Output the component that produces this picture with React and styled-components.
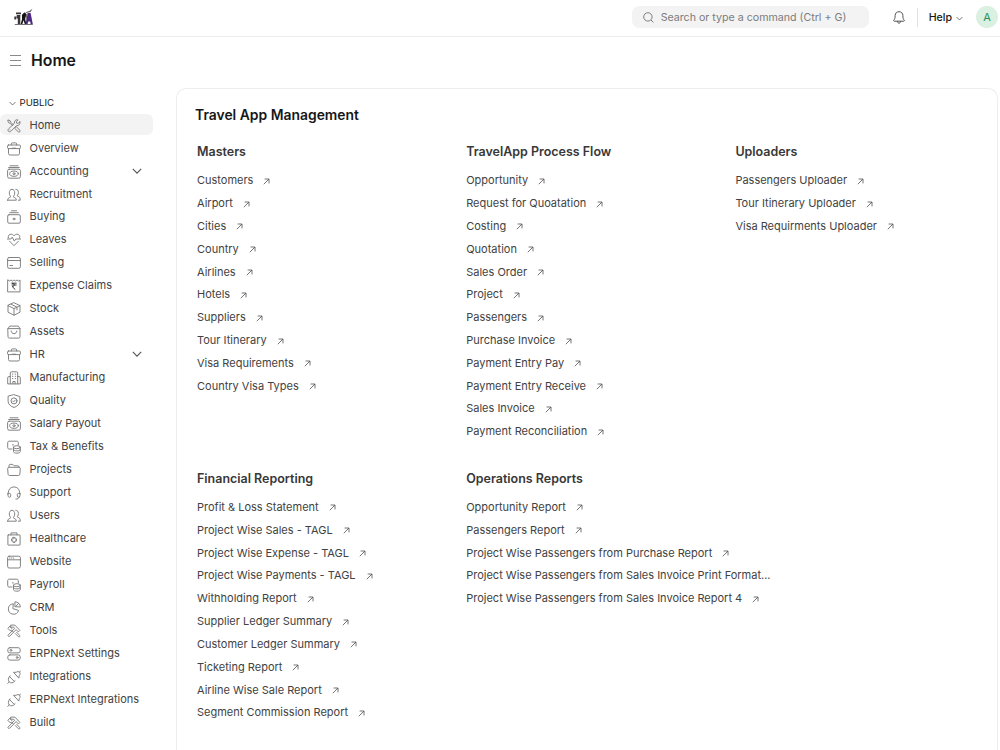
import React from 'react';
import styled, { createGlobalStyle } from 'styled-components';

const icons = {
  tool: (
    <>
      <path d="M1.200 1.100l2 .7.5 1.400 2.600 2.600M1.200 1.100l-.5.6.9 2 1.400.5 2.500 2.500" />
      <path d="M8.300 8.200l.9-.6 3.700 3.600c.9 1-.6 2.500-1.600 1.600L7.700 9.300z" />
      <path d="M12.900 2.900L11 4.500l-1.400-.4-.3-1.400L11 .9C9 .3 6.800 1.900 7.400 4.300L1.500 9.900c-1.500 1.600.7 4 2.400 2.400l5.800-5.800c2.400.5 3.900-1.500 3.200-3.600zM2.900 10.900h.1" />
    </>
  ),
  briefcase: (
    <>
      <rect x=".6" y="3" width="12.800" height="3.600" rx=".8" />
      <path d="M1.500 6.600v5c0 .9.500 1.400 1.400 1.400h8.200c.9 0 1.400-.5 1.400-1.400v-5M4.300 3V2c0-.7.400-1.100 1.100-1.100h3.200c.7 0 1.100.4 1.100 1.100v1" />
      <path d="M5.300 6.200h3.400" />
    </>
  ),
  accounting: (
    <>
      <path d="M3 .8h8M1.700 2.500h10.600" />
      <rect x=".6" y="4.200" width="12.800" height="9" rx="1.600" />
      <ellipse cx="7" cy="8.700" rx="4.300" ry="2.600" />
      <circle cx="7" cy="8.700" r="1" />
    </>
  ),
  users: (
    <>
      <path d="M.7 12.200c0-1.900 1.100-2.600 2.500-2.900.5-.1.600-.6.2-1C2.700 7.500 2.300 6.100 2.300 4.900c0-2.200 1-3.600 2.700-3.600s2.700 1.400 2.700 3.600c0 1.200-.4 2.600-1.100 3.400-.4.400-.3.900.2 1 1.400.3 2.500 1 2.500 2.900H.7z" />
      <path d="M8.800 1.300c1.600 0 2.600 1.200 2.600 3.100 0 1.100-.3 2.100-.9 2.900-.3.500-.2.800.3 1 1.500.4 2.500 1.100 2.500 3.900h-1.900" />
    </>
  ),
  buying: (
    <>
      <path d="M4.500.8h5M2.700 2.700h8.600" />
      <rect x=".7" y="4.700" width="12.600" height="8.500" rx="1.300" />
      <circle cx="7" cy="9" r=".9" />
    </>
  ),
  heart: (
    <>
      <path d="M1.300 5C.8 2.400 2.300 1.200 3.900 1.200c1.300 0 2.400.6 3.100 1.700.7-1.100 1.800-1.700 3.100-1.700 1.600 0 3.100 1.200 2.600 3.800" />
      <path d="M.3 6h3.600l1.300-1.900 2.100 4 1.500-2.100h4.900M2.600 8.200L7 12.700l4.400-4.500" />
    </>
  ),
  card: (
    <>
      <rect x=".6" y="1.500" width="12.800" height="10.800" rx="1.500" />
      <path d="M.6 4.500h12.800M2.900 9.500h2.700" />
    </>
  ),
  expense: (
    <>
      <path d="M1 1l1.500 1L4 1l1.500 1L7 1l1.500 1L10 1l1.500 1L13 1v11.900H1z" />
      <path
        d="M5 4.200h4.200M5 6h4.200M5.200 4.200c2.900 0 2.900 3.400 0 3.400l2.800 2.700"
        stroke="#383838"
        strokeWidth="1"
      />
    </>
  ),
  stock: (
    <path d="M7 .8l6 2.800v6.600l-6 3-6-3V3.600zM1 3.600l6 3 6-3M7 6.600v6.600M4 2.200l6 3v2.700" />
  ),
  assets: (
    <>
      <path d="M1 3.600L2.700 1.100h8.600L13 3.600v8.100c0 .9-.5 1.400-1.400 1.400H2.400c-.9 0-1.400-.5-1.400-1.400zM1 3.600h12" />
      <path d="M4.200 6c0 1.500 1.200 2.700 2.800 2.700S9.800 7.500 9.800 6" />
    </>
  ),
  building: (
    <>
      <path d="M3.300 12.900V1.900c0-.7.400-1.100 1.100-1.100h5.200c.7 0 1.100.4 1.100 1.100v11M3.300 5.600H1.800c-.7 0-1.100.4-1.100 1.100v6.200h12.600V6.700c0-.7-.4-1.100-1.100-1.100h-1.500M5.900 12.900v-2.400h2.200v2.400" />
      <path d="M5.400 3.100h.4M8.200 3.100h.4M5.400 5.300h.4M8.200 5.300h.4M5.400 7.600h.4M8.200 7.600h.4" />
    </>
  ),
  quality: (
    <>
      <path d="M7 .7l5.900 1.900v4.600c0 3-2.400 5-5.900 6.300-3.500-1.300-5.900-3.300-5.900-6.300V2.600z" />
      <circle cx="7" cy="6.900" r="3" />
      <path d="M5.700 7l.9.900 1.800-1.900" />
    </>
  ),
  money: (
    <>
      <path d="M5 9H2.200C1.200 9 .7 8.500.7 7.500V2.700c0-1 .5-1.500 1.500-1.500h7.600c1 0 1.500.5 1.500 1.500V5M5.500 4.900h.9" />
      <ellipse cx="9.900" cy="7.200" rx="3.400" ry="1.500" />
      <path d="M6.500 7.200v4.400c0 .9 1.500 1.600 3.400 1.600s3.400-.7 3.400-1.600V7.200M6.500 9.400c0 .9 1.500 1.500 3.400 1.500s3.400-.6 3.400-1.500" />
    </>
  ),
  folder: (
    <path d="M2 4.200V2.500c0-.7.400-1.100 1.100-1.100h2.700l1.300 1.400h3.800c.7 0 1.100.4 1.100 1.100v.4M.7 5.600c0-.9.500-1.300 1.400-1.300h9.800c.9 0 1.400.4 1.400 1.300l-.4 5.500c-.1.900-.6 1.400-1.500 1.400H2.600c-.9 0-1.400-.5-1.500-1.400z" />
  ),
  support: (
    <>
      <path d="M1.300 8V6.700C1.300 3.300 3.800.9 7 .9s5.700 2.400 5.700 5.800V8M12.500 10.500c-.3 1.700-1.500 2.600-3.600 2.600" />
      <path d="M1 7.400h1.600c.7 0 1.100.4 1.100 1.100v1.600c0 .7-.4 1.100-1.100 1.100-1 0-1.600-.6-1.600-1.600zM13 7.400h-1.600c-.7 0-1.100.4-1.100 1.100v1.600c0 .7.400 1.100 1.100 1.100 1 0 1.600-.6 1.600-1.600z" />
    </>
  ),
  healthcare: (
    <>
      <rect x=".9" y="2.900" width="12.200" height="10.200" rx=".4" />
      <path d="M4 2.900V.9h6v2" />
      <path d="M6 5.400h2v1.500h1.500v2H8v1.500H6V8.900H4.500v-2H6z" />
    </>
  ),
  website: (
    <>
      <rect x=".6" y="1.200" width="12.800" height="11.800" rx="1.600" />
      <path d="M.6 4.800h12.800M2.600 3h.4M4.500 3h.4M6.400 3h.4" />
    </>
  ),
  crm: (
    <>
      <path d="M6 2.800a5.200 5.200 0 1 0 5.600 6.600L6.200 7.700z" />
      <path d="M8.300.8a5 5 0 0 1 5 5.200L8.300 5.700zM8.500 5.600l3.200-3.300" />
    </>
  ),
  hammer: (
    <>
      <path d="M4 1.100h3.900l5 5.300-1.500 1.500-2.300-2.300-6.400 6.600c-.9.900-2.300-.4-1.400-1.300l6.400-6.700-1-1H4z" />
      <path d="M2.700 2.400L.9 4.300l2.300 2.500 1-.9 2 2M2.700 2.400l2.200 2.200M8.300 9.600l3.200 3.200c.9.700 2-.5 1.200-1.300L9.700 8.300" />
    </>
  ),
  settings: (
    <>
      <rect x=".8" y=".7" width="12.400" height="5.200" rx="2" />
      <rect x=".8" y="7.900" width="12.400" height="5.200" rx="2" />
      <circle cx="3.900" cy="3.300" r=".9" />
      <circle cx="10.100" cy="10.500" r=".9" />
    </>
  ),
  integration: (
    <>
      <path d="M2.500 6.600l4.800 4.800c-1.100 1.500-3.600 2-5 .6s-1.200-4.100.2-5.400zM2.100 12.100L.7 13.400M2.500 6.600l.7-.6M7.300 11.400l.7-.6" />
      <path d="M6.900 2.300h2.300c1.200-1.100 2.500-.9 3.300-.1s.9 2.100-.2 3.300l-.4 2.200zM12.400 2.200l1.100-1.300" />
    </>
  ),
};

const sidebarItems = [
  { label: 'Home', icon: 'tool', active: true },
  { label: 'Overview', icon: 'briefcase' },
  { label: 'Accounting', icon: 'accounting', nested: true },
  { label: 'Recruitment', icon: 'users' },
  { label: 'Buying', icon: 'buying' },
  { label: 'Leaves', icon: 'heart' },
  { label: 'Selling', icon: 'card' },
  { label: 'Expense Claims', icon: 'expense' },
  { label: 'Stock', icon: 'stock' },
  { label: 'Assets', icon: 'assets' },
  { label: 'HR', icon: 'briefcase', nested: true },
  { label: 'Manufacturing', icon: 'building' },
  { label: 'Quality', icon: 'quality' },
  { label: 'Salary Payout', icon: 'accounting' },
  { label: 'Tax & Benefits', icon: 'money' },
  { label: 'Projects', icon: 'folder' },
  { label: 'Support', icon: 'support' },
  { label: 'Users', icon: 'users' },
  { label: 'Healthcare', icon: 'healthcare' },
  { label: 'Website', icon: 'website' },
  { label: 'Payroll', icon: 'money' },
  { label: 'CRM', icon: 'crm' },
  { label: 'Tools', icon: 'hammer' },
  { label: 'ERPNext Settings', icon: 'settings' },
  { label: 'Integrations', icon: 'integration' },
  { label: 'ERPNext Integrations', icon: 'integration' },
  { label: 'Build', icon: 'hammer' },
];

const cards = [
  {
    title: 'Masters',
    links: [
      'Customers',
      'Airport',
      'Cities',
      'Country',
      'Airlines',
      'Hotels',
      'Suppliers',
      'Tour Itinerary',
      'Visa Requirements',
      'Country Visa Types',
    ],
  },
  {
    title: 'TravelApp Process Flow',
    links: [
      'Opportunity',
      'Request for Quoatation',
      'Costing',
      'Quotation',
      'Sales Order',
      'Project',
      'Passengers',
      'Purchase Invoice',
      'Payment Entry Pay',
      'Payment Entry Receive',
      'Sales Invoice',
      'Payment Reconciliation',
    ],
  },
  {
    title: 'Uploaders',
    links: ['Passengers Uploader', 'Tour Itinerary Uploader', 'Visa Requirments Uploader'],
  },
  {
    title: 'Financial Reporting',
    links: [
      'Profit & Loss Statement',
      'Project Wise Sales - TAGL',
      'Project Wise Expense - TAGL',
      'Project Wise Payments - TAGL',
      'Withholding Report',
      'Supplier Ledger Summary',
      'Customer Ledger Summary',
      'Ticketing Report',
      'Airline Wise Sale Report',
      'Segment Commission Report',
    ],
  },
  {
    title: 'Operations Reports',
    links: [
      'Opportunity Report',
      'Passengers Report',
      'Project Wise Passengers from Purchase Report',
      'Project Wise Passengers from Sales Invoice Print Format...',
      'Project Wise Passengers from Sales Invoice Report 4',
    ],
  },
];

function Chevron({ size }) {
  return (
    <ChevronSvg width={size} height={size} viewBox="0 0 10 10">
      <path d="M.8 2.900L5 7.100l4.200-4.200" />
    </ChevronSvg>
  );
}

function Logo() {
  return (
    <LogoSvg width="20" height="19" viewBox="0 0 20 19">
      <path d="M2 4.500h5v1.800H2zM3 7h3.300v9H3.800v-5.500H2.600V8zM.3 8.500h1.900v3H.3z" fill="#3a363b" />
      <path d="M7.900 7l2.300-2.500 1.500.5.500 2.500-1.200 3.500 1.500 5h-1.700l-1.300-3.800L8.300 16H6.700l1.400-5z" fill="#141214" />
      <path d="M13.600 5h3L18.800 16h-2.200l-.4-2.400h-2L13.600 16h-2z" fill="#4b2a80" />
      <path d="M12 6h1.500l-.9 6h-1z" fill="#77727a" />
      <path d="M11.500 4.300l3.700-1.200L18.500.8l-1.900 3.200-4.300 1.100z" fill="#666169" />
      <path d="M.8 16h18v1H.8z" fill="#777279" />
    </LogoSvg>
  );
}

function LinkCard({ title, links }) {
  return (
    <Card>
      <CardTitle>{title}</CardTitle>
      {links.map((link) => (
        <CardLink key={link}>
          {link}
          {!link.endsWith('...') && (
            <ArrowSvg width="7" height="7" viewBox="0 0 7 7">
              <path d="M1.600 1h4.400v4.400M6 1L.8 6.200" />
            </ArrowSvg>
          )}
        </CardLink>
      ))}
    </Card>
  );
}

function App() {
  return (
    <Page>
      <GlobalStyle />
      <Navbar>
        <Logo />
        <Search>
          <SearchSvg width="11" height="11" viewBox="0 0 11 11">
            <circle cx="4.900" cy="4.900" r="4.200" />
            <path d="M8 8l2.400 2.400" />
          </SearchSvg>
          Search or type a command (Ctrl + G)
        </Search>
        <BellSvg width="12" height="13" viewBox="0 0 12 13">
          <path d="M6 .7c2.300 0 3.900 1.600 3.900 3.900 0 2.500.3 3.500 1.300 4.500.4.500.2 1.100-.5 1.100H1.300c-.7 0-.9-.6-.5-1.100 1-1 1.300-2 1.300-4.500C2.100 2.300 3.700.7 6 .7zM4.400 10.300c0 2.500 3.200 2.500 3.200 0" />
        </BellSvg>
        <Divider />
        <Help>
          Help
          <Chevron size={7} />
        </Help>
        <Avatar>A</Avatar>
      </Navbar>
      <PageHead>
        <MenuIcon>
          <span />
          <span />
          <span />
        </MenuIcon>
        <PageTitle>Home</PageTitle>
      </PageHead>
      <Body>
        <Sidebar>
          <SectionLabel>
            <Chevron size={7} />
            PUBLIC
          </SectionLabel>
          {sidebarItems.map(({ label, icon, active, nested }) => (
            <SidebarItem key={label} $active={active}>
              <ItemSvg width="14" height="14" viewBox="0 0 14 14">
                {icons[icon]}
              </ItemSvg>
              <ItemLabel>{label}</ItemLabel>
              {nested && <Chevron size={10} />}
            </SidebarItem>
          ))}
        </Sidebar>
        <Workspace>
          <WorkspaceTitle>Travel App Management</WorkspaceTitle>
          <CardGrid>
            {cards.map((card) => (
              <LinkCard key={card.title} {...card} />
            ))}
          </CardGrid>
        </Workspace>
      </Body>
    </Page>
  );
}

export default App;

const GlobalStyle = createGlobalStyle`
  * {
    box-sizing: border-box;
  }

  body {
    margin: 0;
    background-color: #fff;
    color: #424242;
    font-family: Inter, sans-serif;
    font-size: 11px;
  }
`;

const Page = styled.div`
  display: flex;
  flex-direction: column;
  height: 100vh;
`;

const Navbar = styled.header`
  display: flex;
  flex: none;
  align-items: center;
  height: 37px;
  padding: 0 3px 2px 14px;
  border-bottom: 1px solid #ededed;
`;

const LogoSvg = styled.svg`
  margin-right: auto;
`;

const Search = styled.div`
  display: flex;
  align-items: center;
  width: 237px;
  height: 22px;
  padding-left: 11px;
  border-radius: 7px;
  background-color: #f3f3f3;
  color: #7c7c7c;
  font-size: 10.65px;
`;

const SearchSvg = styled.svg`
  margin-right: 7px;
  fill: none;
  stroke: #7c7c7c;
`;

const BellSvg = styled.svg`
  margin: 1px 0 0 24px;
  fill: none;
  stroke: #525252;
`;

const Divider = styled.div`
  width: 1px;
  height: 19px;
  margin: 0 11px 0 12px;
  background-color: #e2e2e2;
`;

const ChevronSvg = styled.svg`
  flex: none;
  fill: none;
  stroke: #525252;
  stroke-width: 1.1;
`;

const Help = styled.div`
  display: flex;
  align-items: center;
  gap: 4px;
  color: #171717;
  font-size: 10.6px;
  font-weight: 500;

  svg {
    margin-top: 3px;
  }
`;

const Avatar = styled.div`
  display: flex;
  align-items: center;
  justify-content: center;
  width: 22px;
  height: 22px;
  margin: 0 -1px 0 13px;
  border-radius: 50%;
  background-color: #daf0e1;
  color: #278f5e;
`;

const PageHead = styled.div`
  display: flex;
  flex: none;
  align-items: center;
  height: 51px;
  padding: 0 0 5px 10px;
`;

const MenuIcon = styled.div`
  display: flex;
  flex-direction: column;
  gap: 4px;
  width: 11px;
  margin: 1px 10px 0 0;

  span {
    height: 1px;
    background-color: #8a8a8a;
  }
`;

const PageTitle = styled.h1`
  margin: 0;
  color: #171717;
  font-size: 15.8px;
  font-weight: 600;
`;

const Body = styled.div`
  display: flex;
  flex: 1;
  min-height: 0;
`;

const Sidebar = styled.nav`
  width: 153px;
  margin-right: 23px;
  padding-top: 3px;
`;

const SectionLabel = styled.div`
  display: flex;
  align-items: center;
  gap: 3.5px;
  height: 22.8px;
  padding-left: 9px;
  color: #171717;
  font-size: 9.6px;

  svg {
    margin-top: 3px;
  }
`;

const SidebarItem = styled.div`
  display: flex;
  align-items: center;
  height: 21.5px;
  margin-bottom: 1.49px;
  padding: 0 11px 0 7px;
  border-radius: 6px;
  background-color: ${({ $active }) => ($active ? '#f3f3f3' : 'transparent')};

  &:last-child {
    margin-bottom: 0;
  }
`;

const ItemSvg = styled.svg`
  flex: none;
  margin-top: 2px;
  fill: none;
  stroke: #7c7c7c;
  stroke-width: 0.95;
  stroke-linecap: round;
  stroke-linejoin: round;
`;

const ItemLabel = styled.span`
  flex: 1;
  margin-left: 8.5px;
  white-space: nowrap;
`;

const Workspace = styled.main`
  width: 822px;
  padding: 17px 18px 0;
  border: 1px solid #ededed;
  border-bottom: 0;
  border-radius: 10px 10px 0 0;
`;

const WorkspaceTitle = styled.h2`
  margin: 0 0 18.8px;
  color: #171717;
  font-size: 13.9px;
  font-weight: 600;
  line-height: 18px;
`;

const CardGrid = styled.div`
  display: grid;
  grid-template-columns: repeat(3, 269.2px);
  row-gap: 26.8px;
  padding-left: 2px;
`;

const Card = styled.section`
  min-width: 0;
`;

const CardTitle = styled.h3`
  margin: 0 0 8px;
  color: #383838;
  font-size: 12.48px;
  font-weight: 600;
  line-height: 18px;
`;

const CardLink = styled.div`
  display: flex;
  align-items: center;
  height: 22.83px;
  white-space: nowrap;
`;

const ArrowSvg = styled.svg`
  flex: none;
  margin: 2px 0 0 10px;
  fill: none;
  stroke: #525252;
  stroke-width: 0.8;
`;
